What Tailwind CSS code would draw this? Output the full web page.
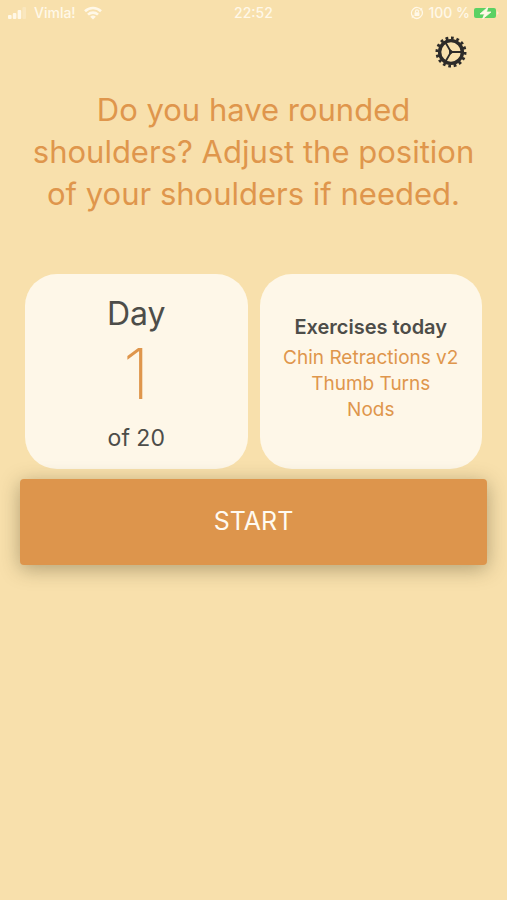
<!DOCTYPE html>
<html lang="en">
<head>
    <meta charset="UTF-8">
    <meta name="viewport" content="width=device-width, initial-scale=1.0">
    <title>Daily Exercises</title>
    <script src="https://cdn.jsdelivr.net/npm/@tailwindcss/browser@4"></script>
</head>
<body class="min-h-screen bg-[#f8e0ac] font-['Inter',sans-serif] text-[#4d4d49]">
    <!-- Status bar -->
    <header class="grid grid-cols-3 items-center h-[26px] px-2 text-sm font-medium text-[#fff8e8]">
        <div class="flex items-center gap-2">
            <svg class="w-[18px] h-3" viewBox="0 0 18 12" fill="currentColor">
                <rect x="0" y="8" width="3.6" height="4" rx="1"/>
                <rect x="4.8" y="6" width="3.6" height="6" rx="1"/>
                <rect x="9.6" y="3" width="3.6" height="9" rx="1"/>
                <rect x="14.4" y="0" width="3.6" height="12" rx="1" opacity=".3"/>
            </svg>
            <span>Vimla!</span>
            <svg class="w-[18px] h-[14px]" viewBox="0 0 18 14" fill="none" stroke="currentColor" stroke-width="2.6">
                <path d="M1 5.2a11.5 11.5 0 0 1 16 0"/>
                <path d="M4 8.6a7.2 7.2 0 0 1 10 0"/>
                <path d="M9 13.6 6.2 10.8a4 4 0 0 1 5.6 0z" fill="currentColor" stroke="none"/>
            </svg>
        </div>
        <span class="text-center">22:52</span>
        <div class="flex items-center justify-end gap-1">
            <svg class="w-[14px] h-[14px]" viewBox="0 0 14 14" fill="none" stroke="currentColor" stroke-width="1.3">
                <path d="M2.3 10A5.6 5.6 0 0 1 11 3.1M11.7 4.2A5.6 5.6 0 0 1 3.2 11.1"/>
                <path d="M12.2 1.6v3H9.3zM1.8 12.4v-3h2.9z" fill="currentColor" stroke="none"/>
                <rect x="4.5" y="6.3" width="5" height="3.7" rx=".7" fill="currentColor" stroke="none"/>
                <path d="M5.5 6.5V5.4a1.5 1.5 0 0 1 3 0v1.1"/>
            </svg>
            <span class="whitespace-nowrap">100 %</span>
            <svg class="w-[25px] h-3" viewBox="0 0 25 12">
                <rect x="0" y="1" width="22" height="10" rx="2" fill="#5bd163"/>
                <path d="M23.3 4.2a2 2 0 0 1 0 3.6z" fill="#fff8e8"/>
                <path d="M14 0 6 7h4.5L8.5 12 17 5h-4.5z" fill="#fff8e8" stroke="#fff8e8" stroke-width=".8"/>
            </svg>
        </div>
    </header>

    <main class="px-5">
        <div class="flex justify-end px-5 pt-[10px]">
            <button type="button" aria-label="Settings" class="block text-[#2d2b29]">
                <svg class="w-8 h-8" viewBox="-16 -16 32 32" fill="none" stroke="currentColor">
                    <circle r="14" stroke-width="3" stroke-dasharray="2.75 2.75" pathLength="88"/>
                    <circle r="11.4" stroke-width="3.4"/>
                    <path d="M0 0h10M0 0-5.2 -9M0 0-5.2 9" stroke-width="1.8"/>
                    <path d="M2.4 0-1.4 -2.4v4.8z" fill="currentColor" stroke-width="1" stroke-linejoin="round"/>
                </svg>
            </button>
        </div>

        <h1 class="mt-[21px] text-center text-[31px] leading-[42px] font-normal text-[#df964c]">Do you have rounded shoulders? Adjust the position of your shoulders if needed.</h1>

        <div class="grid grid-cols-2 gap-3 mt-[59px] px-[5px]">
            <section class="flex flex-col items-center h-[195px] pt-5 rounded-[32px] bg-[#fef7e8]">
                <h2 class="text-[32px] leading-[40px] font-normal">Day</h2>
                <p class="text-[70px] leading-[80px] font-extralight text-[#df964c]">1</p>
                <p class="mt-2 text-[23px] leading-[32px] font-normal">of 20</p>
            </section>
            <section class="flex flex-col items-center justify-center h-[195px] pb-2 rounded-[32px] bg-[#fef7e8] text-center">
                <h2 class="mb-1 text-xl leading-[28px] font-semibold">Exercises today</h2>
                <ul class="text-[19px] leading-[26px] font-normal text-[#df964c]">
                    <li>Chin Retractions v2</li>
                    <li>Thumb Turns</li>
                    <li>Nods</li>
                </ul>
            </section>
        </div>

        <button type="button" class="relative block w-full h-[86px] mt-[10px] rounded-[4px] bg-[#dd954c] text-[25px] font-normal text-[#fffaf0] shadow-[0_4px_20px_rgba(70,60,30,0.4)]">START</button>
    </main>
</body>
</html>
